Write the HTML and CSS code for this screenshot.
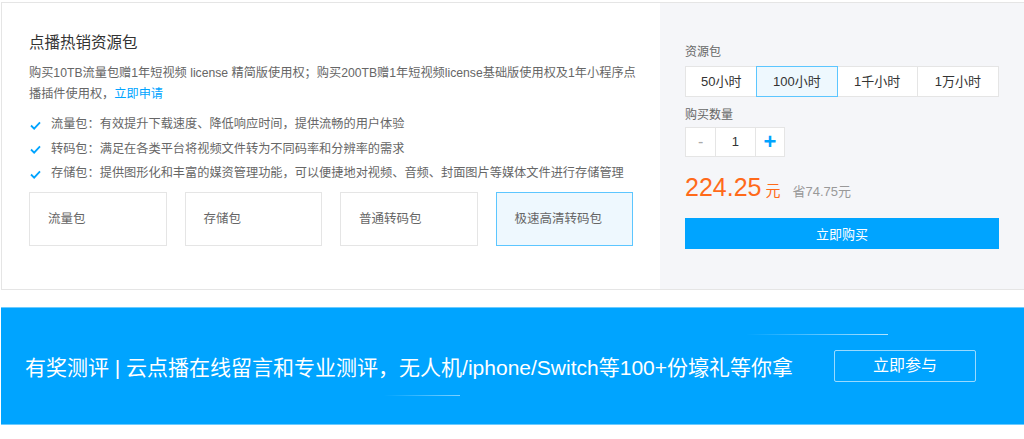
FILE: index.html
```html
<!DOCTYPE html>
<html lang="zh-CN">
<head>
<meta charset="UTF-8">
<meta name="viewport" content="width=device-width, initial-scale=1.0">
<title>点播热销资源包</title>
<link rel="stylesheet" href="styles.css">
</head>
<body>
<div class="page">
  <div class="card">
    <div class="intro">
      <h2>点播热销资源包</h2>
      <p class="desc"><span class="line">购买10TB流量包赠1年短视频 license 精简版使用权；购买200TB赠1年短视频license基础版使用权及1年小程序点</span><br>播插件使用权，<a href="#">立即申请</a></p>
      <ul class="feats">
        <li><svg viewBox="0 0 12 10"><polyline points="1,5 4.5,8.5 11,1.5"/></svg>流量包：有效提升下载速度、降低响应时间，提供流畅的用户体验</li>
        <li><svg viewBox="0 0 12 10"><polyline points="1,5 4.5,8.5 11,1.5"/></svg>转码包：满足在各类平台将视频文件转为不同码率和分辨率的需求</li>
        <li><svg viewBox="0 0 12 10"><polyline points="1,5 4.5,8.5 11,1.5"/></svg>存储包：提供图形化和丰富的媒资管理功能，可以便捷地对视频、音频、封面图片等媒体文件进行存储管理</li>
      </ul>
      <div class="types">
        <div class="type">流量包</div>
        <div class="type">存储包</div>
        <div class="type">普通转码包</div>
        <div class="type active">极速高清转码包</div>
      </div>
    </div>
    <div class="buy">
      <div class="label">资源包</div>
      <div class="seg">
        <span class="s1">50小时</span>
        <span class="s2 active">100小时</span>
        <span class="s3">1千小时</span>
        <span class="s4">1万小时</span>
      </div>
      <div class="label">购买数量</div>
      <div class="qty">
        <span class="minus">-</span>
        <span class="num">1</span>
        <span class="plus">+</span>
      </div>
      <div class="price">
        <span class="amount">224.25</span><span class="unit">元</span>
        <span class="save">省74.75元</span>
      </div>
      <button class="buy-btn">立即购买</button>
    </div>
  </div>

  <div class="banner">
    <i class="deco d1"></i>
    <i class="deco d2"></i>
    <p>有奖测评 | 云点播在线留言和专业测评，无人机/iphone/Switch等100+份壕礼等你拿</p>
    <a class="join" href="#">立即参与</a>
  </div>
</div>
</body>
</html>
```

FILE: styles.css
```css
:root {
  --blue: #00a4ff;
  --text: #333;
  --muted: #666;
  --line: #e5e5e5;
  --panel: #f5f6f9;
  --active-bg: #eef8fe;
}
body { margin: 0; overflow: hidden; background: #fff; color: var(--text);
  font-family: "Liberation Sans", "Noto Sans CJK SC", sans-serif; font-size: 13px; }
.page { padding: 2px 0 0 1px; width: 1060px; }

.card { display: flex; border: 1px solid var(--line); }
.intro { width: 604px; padding: 28px 27px 43px 27px; }
.intro h2 { margin: 0; font-size: 15.5px; line-height: 24px; font-weight: normal; color: var(--text); }
.desc { margin: 8px 0 0; line-height: 21px; font-size: 12.2px; color: var(--muted); }
.desc .line { white-space: nowrap; }
.desc a { color: var(--blue); text-decoration: none; }
.feats { list-style: none; margin: 7px 0 0; padding: 0; }
.feats li { display: flex; align-items: center; line-height: 24.5px; font-size: 12.2px; color: var(--muted); white-space: nowrap; }
.feats svg { flex-shrink: 0; width: 11px; height: 9px; margin: 2px 10px 0 1px; fill: none; stroke: var(--blue); stroke-width: 2; }
.types { display: flex; gap: 18px; margin-top: 6px; }
.type { flex: 1; height: 52px; line-height: 52px; padding-left: 18px; border: 1px solid var(--line); color: var(--muted); font-size: 12.5px; }
.type.active { border-color: #5cc6ff; background: var(--active-bg); }

.buy { width: 314px; padding: 40px 25px 0 25px; background: var(--panel); }
.label { font-size: 12px; line-height: 18px; color: var(--muted); }
.seg { display: flex; margin: 5px 0 9px; background: #fff; }
.seg span { height: 29px; line-height: 29px; text-align: center; border: 1px solid var(--line); margin-left: -1px; color: var(--text); }
.seg span:first-child { margin-left: 0; }
.seg .s1 { width: 71px; }
.seg .s2 { width: 80px; }
.seg .s3 { width: 80px; }
.seg .s4 { width: 81px; }
.seg .active { border-color: #5cc6ff; background: var(--active-bg); position: relative; }
.qty { display: flex; margin-top: 3px; width: 100px; background: #fff; }
.qty span { height: 28px; line-height: 28px; text-align: center; border: 1px solid var(--line); margin-left: -1px; }
.qty .minus { width: 30px; margin-left: 0; color: #aaa; font-size: 16px; }
.qty .num { width: 40px; color: var(--text); }
.qty .plus { width: 29px; color: var(--blue); font-size: 22px; font-weight: bold; }
.price { display: flex; align-items: baseline; margin-top: 16px; height: 30px; }
.amount { font-size: 25px; color: #ff6a1a; }
.unit { font-size: 15px; color: #ff6a1a; margin-left: 4px; }
.save { margin-left: 12px; color: #999; font-size: 13px; }
.buy-btn { display: block; width: 314px; height: 31px; margin-top: 15px; border: none; background: var(--blue);
  color: #fff; font-family: inherit; font-size: 13px; cursor: pointer; }

.banner { position: relative; display: flex; align-items: center; width: 1023px; height: 116px; margin-top: 17px;
  background: var(--blue); border-top: 1px solid #6ccbff; border-bottom: 1px solid #6ccbff; }
.banner p { margin: 0 0 0 24px; font-size: 21px; color: #fff; white-space: nowrap; }
.join { margin-left: 41px; width: 140px; height: 30px; line-height: 30px; text-align: center; color: #fff;
  font-size: 16px; text-decoration: none; border: 1px solid rgba(255,255,255,.6); border-radius: 2px; }
.deco { position: absolute; height: 1px; }
.d1 { left: 745px; top: 26px; width: 142px; background: linear-gradient(90deg, rgba(255,255,255,0), rgba(255,255,255,.7)); }
.d2 { left: 383px; top: 87px; width: 76px; background: linear-gradient(90deg, rgba(255,255,255,0), rgba(255,255,255,.5)); }
```
